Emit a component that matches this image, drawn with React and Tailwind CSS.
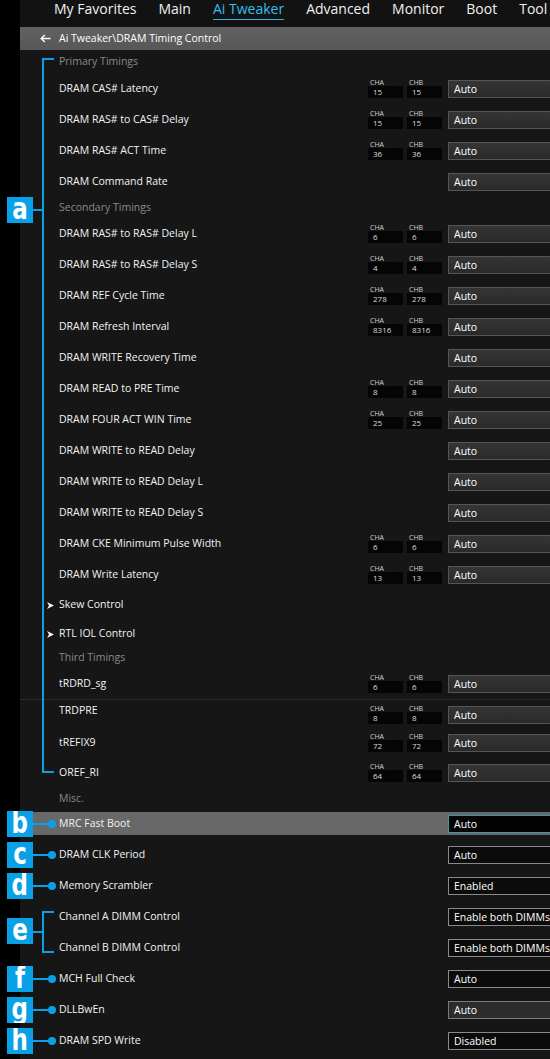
import React from "react";

const NAV = ["My Favorites", "Main", "Ai Tweaker", "Advanced", "Monitor", "Boot", "Tool"];

// h = row height in px, shift = nudge label up
const ROWS = [
  { type: "header", label: "Primary Timings", h: 23 },
  { label: "DRAM CAS# Latency", cha: "15", chb: "15" },
  { label: "DRAM RAS# to CAS# Delay", cha: "15", chb: "15" },
  { label: "DRAM RAS# ACT Time", cha: "36", chb: "36" },
  { label: "DRAM Command Rate" },
  { type: "header", label: "Secondary Timings", h: 21 },
  { label: "DRAM RAS# to RAS# Delay L", cha: "6", chb: "6" },
  { label: "DRAM RAS# to RAS# Delay S", cha: "4", chb: "4" },
  { label: "DRAM REF Cycle Time", cha: "278", chb: "278" },
  { label: "DRAM Refresh Interval", cha: "8316", chb: "8316" },
  { label: "DRAM WRITE Recovery Time" },
  { label: "DRAM READ to PRE Time", cha: "8", chb: "8" },
  { label: "DRAM FOUR ACT WIN Time", cha: "25", chb: "25" },
  { label: "DRAM WRITE to READ Delay" },
  { label: "DRAM WRITE to READ Delay L" },
  { label: "DRAM WRITE to READ Delay S" },
  { label: "DRAM CKE Minimum Pulse Width", cha: "6", chb: "6" },
  { label: "DRAM Write Latency", cha: "13", chb: "13" },
  { type: "sub", label: "Skew Control", h: 30 },
  { type: "sub", label: "RTL IOL Control", h: 28 },
  { type: "header", label: "Third Timings", h: 20 },
  { label: "tRDRD_sg", cha: "6", chb: "6" },
  { label: "TRDPRE", cha: "8", chb: "8", h: 29, shift: true, seam: true },
  { label: "tREFIX9", cha: "72", chb: "72", h: 29 },
  { label: "OREF_RI", cha: "64", chb: "64" },
  { type: "header", label: "Misc.", h: 24, shift: true },
  { label: "MRC Fast Boot", h: 23, box: "sel", active: true },
  { type: "gap", h: 4 },
  { label: "DRAM CLK Period", box: "dark" },
  { label: "Memory Scrambler", value: "Enabled", box: "dark" },
  { label: "Channel A DIMM Control", value: "Enable both DIMMs", box: "dark" },
  { label: "Channel B DIMM Control", value: "Enable both DIMMs", box: "dark" },
  { label: "MCH Full Check", box: "dark" },
  { label: "DLLBwEn", box: "gray" },
  { label: "DRAM SPD Write", value: "Disabled", box: "dark" },
];

const DOT_TAGS = [
  { letter: "b", y: 823 },
  { letter: "c", y: 854 },
  { letter: "d", y: 885 },
  { letter: "f", y: 978 },
  { letter: "g", y: 1009 },
  { letter: "h", y: 1040 },
];

const FONT = { fontFamily: '"Open Sans", "Noto Sans", sans-serif' };
const TAG_FONT = { fontFamily: '"Liberation Sans Narrow", "DejaVu Sans Condensed", "Liberation Sans", sans-serif' };

function ChBox({ name, value }) {
  return (
    <div className="flex w-[35px] flex-col">
      <div className="pl-[2px] text-[7px] leading-[7px] text-[#cfcfcf]">{name}</div>
      <div className="h-[12px] bg-[#050505] pl-[5px] text-[8px] leading-[12px] text-[#dcdcdc]">{value}</div>
    </div>
  );
}

function Dropdown({ value, box }) {
  const skin =
    box === "sel"
      ? "border-[#3a9a9e] bg-[#030303]"
      : box === "dark"
      ? "border-[#8a8a8a] bg-[#0b0b0b]"
      : box === "gray"
      ? "border-[#7a7a7a] bg-[#2c2c2c]"
      : "border-[#555] bg-gradient-to-b from-[#353535] to-[#2a2a2a]";
  return (
    <div className={"h-[18px] w-[120px] shrink-0 whitespace-nowrap border pl-[5px] text-[10.5px] leading-[16px] text-white " + skin}>
      {value}
    </div>
  );
}

function Row({ r }) {
  const h = r.h || 31;
  if (r.type === "gap") return <div style={{ height: h }} />;
  if (r.type === "header") {
    return (
      <div
        className={"flex items-center pl-[39px] text-[10.5px] text-[#8a8a8a] " + (r.shift ? "pb-[3px]" : "")}
        style={{ height: h }}
      >
        {r.label}
      </div>
    );
  }
  if (r.type === "sub") {
    return (
      <div className="flex items-center gap-[5px] pl-[27px] text-[10.5px] text-[#f2f2f2]" style={{ height: h }}>
        <svg width="7" height="7" viewBox="0 0 7 7">
          <polygon points="0,0 7,3.5 0,7 2,3.5" fill="#f2f2f2" />
        </svg>
        {r.label}
      </div>
    );
  }
  return (
    <div
      className={
        "flex items-center overflow-hidden " +
        (r.active ? "bg-[#686868] " : "") +
        (r.seam ? "border-t border-[#2c2c2c] " : "")
      }
      style={{ height: h }}
    >
      <div className={"w-[348px] shrink-0 pl-[39px] text-[10.5px] text-[#f2f2f2] " + (r.shift ? "pb-[6px]" : "")}>
        {r.label}
      </div>
      <div className="flex h-[19px] items-end">
        <div className="flex w-[80px] shrink-0 gap-[4px]">
          {r.cha && <ChBox name="CHA" value={r.cha} />}
          {r.chb && <ChBox name="CHB" value={r.chb} />}
        </div>
        <Dropdown value={r.value || "Auto"} box={r.box} />
      </div>
    </div>
  );
}

function Tag({ letter, top }) {
  return (
    <div
      className="absolute left-[7px] flex h-[26px] w-[26px] items-center justify-center overflow-hidden bg-[#0aa0e6] text-[30px] font-bold leading-[26px] text-white"
      style={{ top, ...TAG_FONT }}
    >
      <span className="scale-x-[0.85] pb-[3px]">{letter}</span>
    </div>
  );
}

export default function App() {
  return (
    <div className="relative flex h-[1059px] w-[550px] overflow-hidden bg-black" style={FONT}>
      <div className="w-[20px] shrink-0 bg-black" />
      <div className="flex w-[530px] shrink-0 flex-col overflow-hidden bg-[#161616]">
        {/* top menu */}
        <div className="flex h-[27px] shrink-0 gap-[22px] bg-[#121212] pl-[34px] text-[14px] leading-[17px] text-[#f0f0f0]">
          {NAV.map((n) => (
            <div key={n} className="whitespace-nowrap">
              {n === "Ai Tweaker" ? (
                <span className="border-b border-[#2ab6ea] pb-[1px] text-[#35bdf0]">{n}</span>
              ) : (
                n
              )}
            </div>
          ))}
        </div>

        {/* breadcrumb */}
        <div className="flex h-[23px] shrink-0 items-center gap-[8px] bg-gradient-to-b from-[#626262] to-[#575757] pl-[20px] text-[10.5px] text-white">
          <svg width="11" height="9" viewBox="0 0 11 9">
            <path d="M10.5 4.5H1.5M4.8 1L1.2 4.5L4.8 8" stroke="white" strokeWidth="1.4" fill="none" />
          </svg>
          <span>Ai Tweaker\DRAM Timing Control</span>
        </div>

        {ROWS.map((r, i) => (
          <Row key={i} r={r} />
        ))}
      </div>

      {/* annotation overlay */}
      <div className="absolute left-[42px] top-[58px] h-[715px] w-[2px] bg-[#0aa0e6]" />
      <div className="absolute left-[42px] top-[58px] h-[2px] w-[12px] bg-[#0aa0e6]" />
      <div className="absolute left-[42px] top-[771px] h-[2px] w-[12px] bg-[#0aa0e6]" />
      <div className="absolute left-[33px] top-[209px] h-[2px] w-[9px] bg-[#0aa0e6]" />
      <Tag letter="a" top={197} />

      <div className="absolute left-[42px] top-[911px] h-[42px] w-[2px] bg-[#0aa0e6]" />
      <div className="absolute left-[42px] top-[911px] h-[2px] w-[12px] bg-[#0aa0e6]" />
      <div className="absolute left-[42px] top-[951px] h-[2px] w-[12px] bg-[#0aa0e6]" />
      <div className="absolute left-[33px] top-[931px] h-[2px] w-[9px] bg-[#0aa0e6]" />
      <Tag letter="e" top={918} />

      {DOT_TAGS.map((t) => (
        <React.Fragment key={t.letter}>
          <Tag letter={t.letter} top={t.y - 12} />
          <div className="absolute left-[33px] h-[2px] w-[17px] bg-[#0aa0e6]" style={{ top: t.y }} />
          <div className="absolute left-[48px] h-[8px] w-[8px] rounded-full bg-[#0aa0e6]" style={{ top: t.y - 3 }} />
        </React.Fragment>
      ))}
    </div>
  );
}
